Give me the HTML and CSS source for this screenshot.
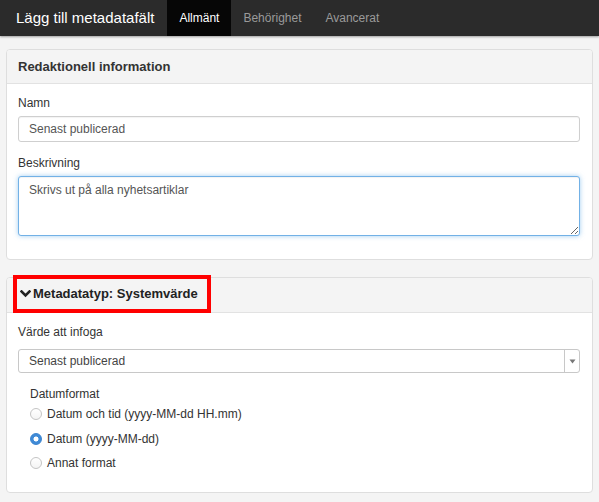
FILE: index.html
```html
<!DOCTYPE html>
<html lang="sv">
<head>
<meta charset="utf-8">
<title>Lägg till metadatafält</title>
<link rel="stylesheet" href="styles.css">
</head>
<body>
  <header class="navbar">
    <div class="brand">Lägg till metadatafält</div>
    <nav class="tabs">
      <a class="tab active">Allmänt</a>
      <a class="tab">Behörighet</a>
      <a class="tab">Avancerat</a>
    </nav>
  </header>

  <main class="content">
    <section class="panel">
      <div class="panel-heading">Redaktionell information</div>
      <div class="panel-body">
        <div class="form-group">
          <label class="label">Namn</label>
          <input class="input" type="text" value="Senast publicerad">
        </div>
        <div class="form-group last">
          <label class="label">Beskrivning</label>
          <textarea class="input textarea focused">Skrivs ut på alla nyhetsartiklar</textarea>
        </div>
      </div>
    </section>

    <section class="panel">
      <div class="panel-heading heading-type">
        <span class="type-title marked">
          <svg class="chevron" width="11" height="8" viewBox="0 0 11 8"><polyline points="1.5,1.5 5.5,5.5 9.5,1.5" fill="none" stroke="#222" stroke-width="2.6" stroke-linecap="square"/></svg>
          Metadatatyp: Systemvärde
        </span>
      </div>
      <div class="panel-body body-type">
        <div class="form-group">
          <label class="label">Värde att infoga</label>
          <div class="select">
            <span class="select-text">Senast publicerad</span>
            <span class="select-arrow"><svg width="7" height="5" viewBox="0 0 7 5"><polygon points="0.5,0.5 6.5,0.5 3.5,4.5" fill="#777"/></svg></span>
          </div>
        </div>
        <fieldset class="formats">
          <div class="legend">Datumformat</div>
          <label class="radio-row"><span class="radio"></span>Datum och tid (yyyy-MM-dd HH.mm)</label>
          <label class="radio-row"><span class="radio checked"></span>Datum (yyyy-MM-dd)</label>
          <label class="radio-row"><span class="radio"></span>Annat format</label>
        </fieldset>
      </div>
    </section>
  </main>
</body>
</html>
```
FILE: styles.css
```css
* { box-sizing: border-box; }

html, body {
  margin: 0;
  padding: 0;
}

body {
  background: #f4f4f4;
  font-family: "Liberation Sans", Arial, sans-serif;
  color: #333;
  font-size: 12px;
  width: 599px;
  height: 502px;
  overflow: hidden;
}

/* top bar */
.navbar {
  height: 36px;
  background: #2b2b2b;
  display: flex;
  align-items: stretch;
  box-shadow: 0 1px 2px rgba(0, 0, 0, 0.35);
  position: relative;
}

.brand {
  color: #fff;
  font-size: 15px;
  line-height: 36px;
  padding-left: 16px;
  padding-right: 13px;
}

.tabs {
  display: flex;
}

.tab {
  display: block;
  padding: 0 12px;
  line-height: 36px;
  font-size: 12px;
  color: #9a9a9a;
}

.tab.active {
  background: #060606;
  color: #fff;
}

/* page content */
.content {
  padding: 13px 6px 0;
}

.panel {
  background: #fff;
  border: 1px solid #dedede;
  border-radius: 4px;
  margin-bottom: 17px;
}

.panel-heading {
  background: #f4f4f4;
  border-bottom: 1px solid #e2e2e2;
  border-radius: 3px 3px 0 0;
  padding: 9px 11px;
  font-size: 13px;
  line-height: 15px;
  font-weight: bold;
  color: #333;
}

.panel-body {
  padding: 12px 12px 23px 11px;
}

.form-group {
  margin-bottom: 14px;
}

.form-group.last {
  margin-bottom: 0;
}

.label {
  display: block;
  font-size: 12px;
  line-height: 15px;
  margin-bottom: 5px;
  color: #333;
}

.input {
  display: block;
  width: 100%;
  height: 26px;
  border: 1px solid #cfcfcf;
  border-radius: 3px;
  padding: 0 10px;
  font-family: inherit;
  font-size: 12px;
  color: #555;
  background: #fff;
  box-shadow: inset 0 1px 1px rgba(0, 0, 0, 0.05);
  outline: none;
}

.textarea {
  height: 60px;
  padding: 6px 10px;
  line-height: 15px;
  resize: vertical;
}

.textarea.focused {
  border-color: #72b1e6;
  box-shadow: inset 0 1px 1px rgba(0, 0, 0, 0.05), 0 0 5px rgba(102, 175, 233, 0.6);
}

/* second panel */
.heading-type {
  padding: 1px 10px 3px;
  line-height: 17px;
}

.type-title {
  display: inline-flex;
  align-items: center;
  padding: 6px 9px 7px 3px;
  line-height: 17px;
  font-size: 13px;
  color: #222;
}

.type-title.marked {
  outline: 4px solid #f00;
}

.chevron {
  margin-right: 2px;
}

.body-type {
  padding-top: 12px;
  padding-bottom: 16px;
}

.body-type .label {
  margin-bottom: 9px;
}

.select {
  display: flex;
  height: 24px;
  border: 1px solid #c8c8c8;
  border-radius: 3px;
  background: #fff;
}

.select-text {
  flex: 1;
  line-height: 22px;
  padding-left: 10px;
  font-size: 12px;
  color: #444;
}

.select-arrow {
  width: 15px;
  border-left: 1px solid #c8c8c8;
  display: flex;
  align-items: center;
  justify-content: center;
}

.formats {
  border: 0;
  margin: 0;
  padding: 0 0 0 12px;
}

.legend {
  font-size: 12px;
  line-height: 15px;
  margin-bottom: 0;
}

.radio-row {
  display: flex;
  align-items: center;
  height: 24.5px;
  font-size: 12px;
  color: #333;
}

.radio {
  width: 12px;
  height: 12px;
  border-radius: 50%;
  border: 1px solid #c4c4c4;
  background: linear-gradient(#fff, #f4f4f4);
  margin-right: 5px;
  flex: none;
}

.radio.checked {
  border-color: #3a83cf;
  background: radial-gradient(circle, #fff 0 2.2px, #3f8ad6 2.8px);
}
```
